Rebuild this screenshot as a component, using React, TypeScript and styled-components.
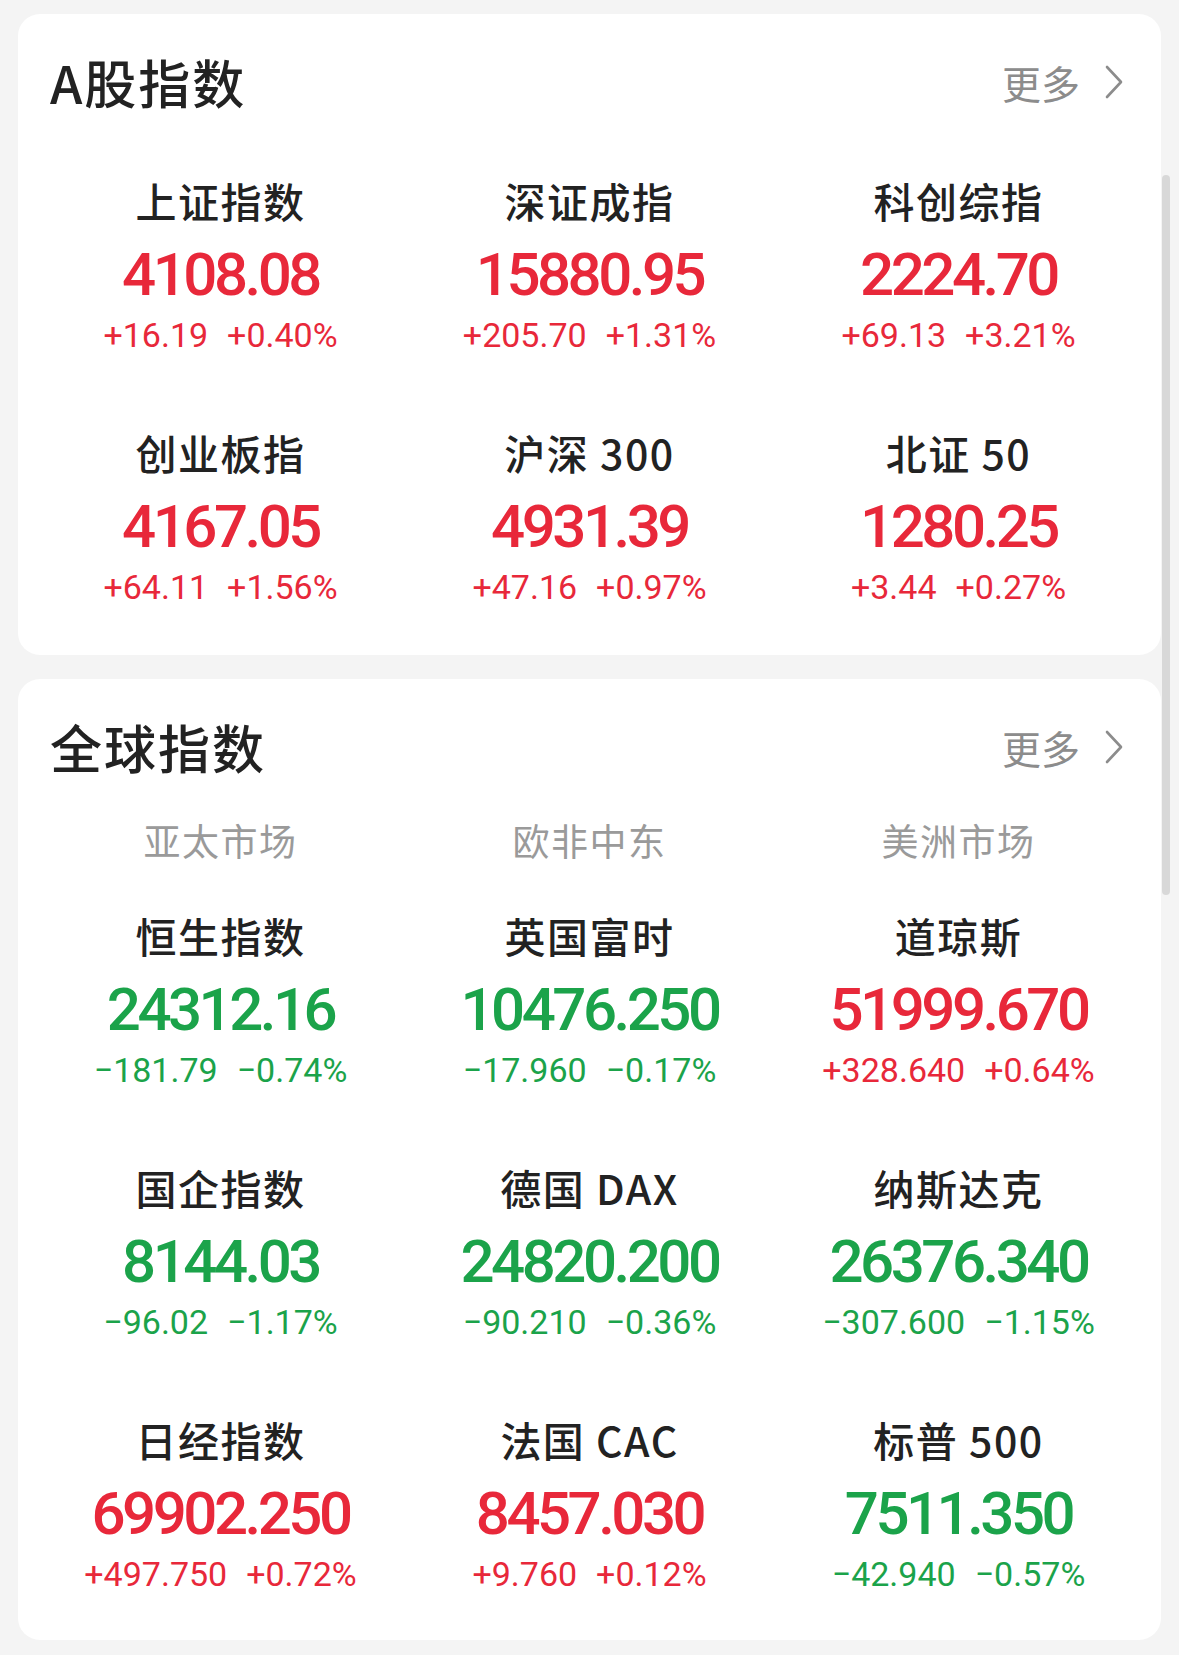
import styled, { createGlobalStyle } from 'styled-components';

const GlobalStyle = createGlobalStyle`
  html, body {
    margin: 0;
    padding: 0;
    background: #f4f4f4;
  }
  * {
    box-sizing: border-box;
  }
`;

const UP = '#e8283a';
const DOWN = '#1ba34a';

type Quote = {
  name: string;
  value: string;
  change: string;
  percent: string;
};

const aShares: Quote[] = [
  { name: '上证指数', value: '4108.08', change: '+16.19', percent: '+0.40%' },
  { name: '深证成指', value: '15880.95', change: '+205.70', percent: '+1.31%' },
  { name: '科创综指', value: '2224.70', change: '+69.13', percent: '+3.21%' },
  { name: '创业板指', value: '4167.05', change: '+64.11', percent: '+1.56%' },
  { name: '沪深300', value: '4931.39', change: '+47.16', percent: '+0.97%' },
  { name: '北证50', value: '1280.25', change: '+3.44', percent: '+0.27%' },
];

const globalQuotes: Quote[] = [
  { name: '恒生指数', value: '24312.16', change: '−181.79', percent: '−0.74%' },
  { name: '英国富时', value: '10476.250', change: '−17.960', percent: '−0.17%' },
  { name: '道琼斯', value: '51999.670', change: '+328.640', percent: '+0.64%' },
  { name: '国企指数', value: '8144.03', change: '−96.02', percent: '−1.17%' },
  { name: '德国DAX', value: '24820.200', change: '−90.210', percent: '−0.36%' },
  { name: '纳斯达克', value: '26376.340', change: '−307.600', percent: '−1.15%' },
  { name: '日经指数', value: '69902.250', change: '+497.750', percent: '+0.72%' },
  { name: '法国CAC', value: '8457.030', change: '+9.760', percent: '+0.12%' },
  { name: '标普500', value: '7511.350', change: '−42.940', percent: '−0.57%' },
];

const markets = ['亚太市场', '欧非中东', '美洲市场'];

const Page = styled.div`
  position: relative;
  min-height: 1655px;
  padding: 14px 18px;
  display: flex;
  flex-direction: column;
  gap: 24px;
  font-family: 'Noto Sans CJK SC', 'Noto Sans', sans-serif;
`;

const Card = styled.section<{ $bottom: number }>`
  background: #ffffff;
  border-radius: 22px;
  padding: 34px 18px ${(p) => p.$bottom}px;
`;

const Header = styled.div`
  display: flex;
  align-items: center;
  justify-content: space-between;
  height: 68px;
  padding: 0 19px 0 14px;
`;

const Title = styled.h2`
  margin: 0;
  font-size: 52px;
  line-height: 68px;
  font-weight: 500;
  color: #222222;
  letter-spacing: 2px;
`;

const More = styled.div`
  display: flex;
  align-items: center;
  gap: 24px;
  font-size: 39px;
  color: #8c8c8c;
  font-weight: 400;
`;

const Grid = styled.div<{ $top: number }>`
  display: grid;
  grid-template-columns: repeat(3, 1fr);
  row-gap: 67px;
  margin-top: ${(p) => p.$top}px;
`;

const MarketRow = styled.div`
  display: grid;
  grid-template-columns: repeat(3, 1fr);
  margin-top: 34px;
`;

const Market = styled.div`
  text-align: center;
  font-size: 37px;
  line-height: 50px;
  color: #9a9a9a;
  letter-spacing: 1.5px;
`;

const Cell = styled.div`
  display: flex;
  flex-direction: column;
  align-items: center;
`;

const Name = styled.div`
  font-size: 41px;
  line-height: 50px;
  font-weight: 500;
  color: #222222;
  letter-spacing: 1.5px;
  white-space: nowrap;
`;

const Value = styled.div<{ $up: boolean }>`
  margin-top: 15px;
  font-family: Roboto, 'Liberation Sans', sans-serif;
  font-size: 60px;
  line-height: 70px;
  font-weight: 500;
  letter-spacing: -3.5px;
  color: ${(p) => (p.$up ? UP : DOWN)};
`;

const ChangeRow = styled.div<{ $up: boolean }>`
  display: flex;
  gap: 19px;
  font-family: Roboto, 'Liberation Sans', sans-serif;
  font-size: 34px;
  line-height: 50px;
  font-weight: 400;
  color: ${(p) => (p.$up ? UP : DOWN)};
`;

const ScrollThumb = styled.div`
  position: absolute;
  left: 1162px;
  top: 175px;
  width: 8px;
  height: 720px;
  border-radius: 4px;
  background: #d8d8d8;
`;

function Chevron() {
  return (
    <svg width="20" height="36" viewBox="0 0 20 36">
      <polyline
        points="3,3 17,18 3,33"
        fill="none"
        stroke="#8c8c8c"
        strokeWidth="2.6"
        strokeLinecap="round"
        strokeLinejoin="round"
      />
    </svg>
  );
}

function QuoteCell({ q }: { q: Quote }) {
  const up = q.change.startsWith('+');
  return (
    <Cell>
      <Name>{q.name.replace(/(\D)(\d|[A-Z])/, '$1 $2')}</Name>
      <Value $up={up}>{q.value}</Value>
      <ChangeRow $up={up}>
        <span>{q.change}</span>
        <span>{q.percent}</span>
      </ChangeRow>
    </Cell>
  );
}

function SectionHeader({ title }: { title: string }) {
  return (
    <Header>
      <Title>{title}</Title>
      <More>
        <span>更多</span>
        <Chevron />
      </More>
    </Header>
  );
}

export default function App() {
  return (
    <>
      <GlobalStyle />
      <Page>
        <Card $bottom={43}>
          <SectionHeader title="A股指数" />
          <Grid $top={59}>
            {aShares.map((q) => (
              <QuoteCell key={q.name} q={q} />
            ))}
          </Grid>
        </Card>

        <Card $bottom={41}>
          <SectionHeader title="全球指数" />
          <MarketRow>
            {markets.map((m) => (
              <Market key={m}>{m}</Market>
            ))}
          </MarketRow>
          <Grid $top={45}>
            {globalQuotes.map((q) => (
              <QuoteCell key={q.name} q={q} />
            ))}
          </Grid>
        </Card>
        <ScrollThumb />
      </Page>
    </>
  );
}
